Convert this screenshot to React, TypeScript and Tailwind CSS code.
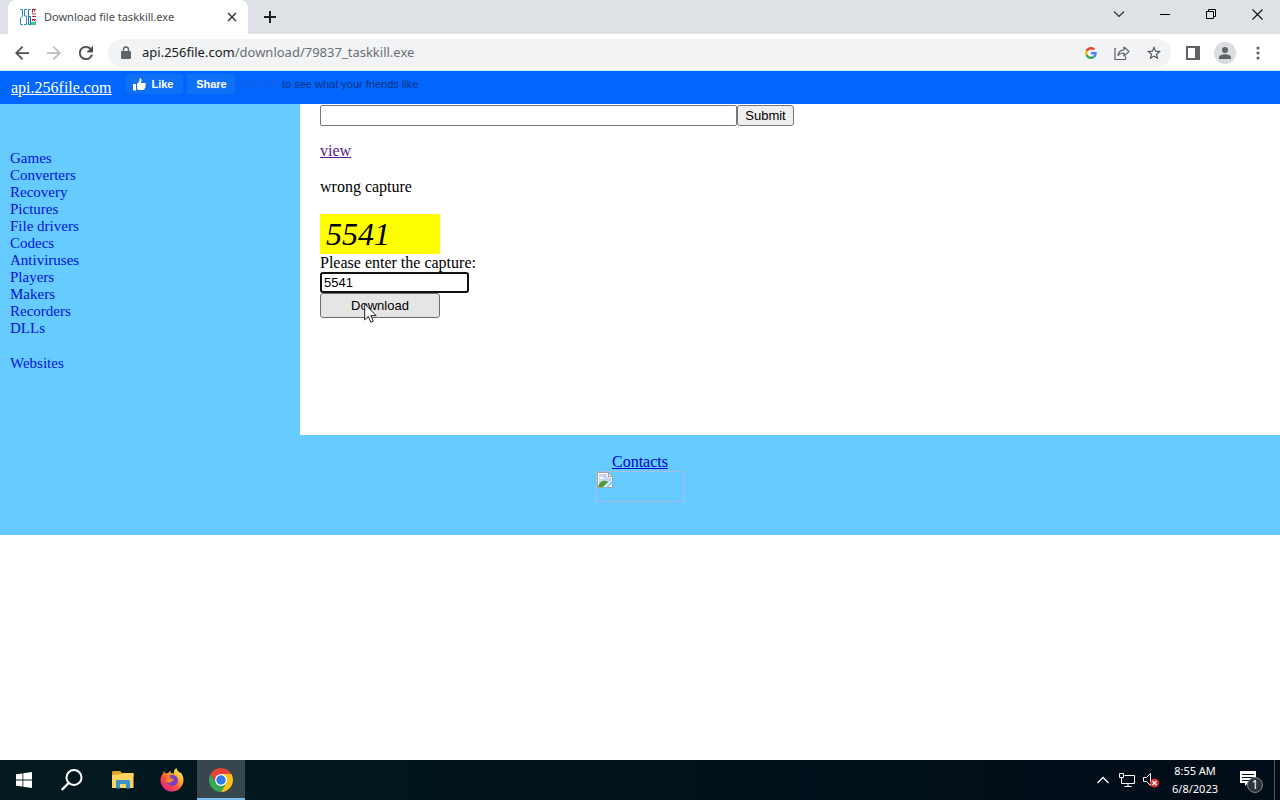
import React from "react";

const categories = [
  "Games",
  "Converters",
  "Recovery",
  "Pictures",
  "File drivers",
  "Codecs",
  "Antiviruses",
  "Players",
  "Makers",
  "Recorders",
  "DLLs",
];

function Favicon() {
  return (
    <svg width="16" height="16" viewBox="0 0 16 16" fill="none" aria-hidden="true">
      <path d="M0 .5h2.500v6.500L.5 9v6.500H3M7 .5H4.500v6.500h2v8.500H4" stroke="#2a8fc4" />
      <path d="M10.500 .5H8.500v15h2v-8h-2" stroke="#1f6f9f" />
      <path d="M12.500 0v3.500M12 .5h4M14.500.5v2M12 5h4M12 7.500h4M12 10.500h4M12.500 10v2M14.500 10v2" stroke="#c2223f" strokeWidth="1.200" />
      <path d="M11 13h4v-1h1v4h-5z" fill="#35c98c" />
    </svg>
  );
}

function TabStrip() {
  return (
    <div className="flex h-[34px] items-stretch bg-[#dee1e6]">
      <div className="ml-2 flex w-60 items-center rounded-t-lg bg-white pr-[9px] pl-3">
        <Favicon />
        <span className="ml-2 flex-1 text-[11px] whitespace-nowrap text-[#45494d]">Download file taskkill.exe</span>
        <button aria-label="Close tab" className="p-0.5">
          <svg width="10" height="10" viewBox="0 0 10 10" stroke="#3c4043" strokeWidth="1.600">
            <path d="M1 1l8 8M9 1l-8 8" />
          </svg>
        </button>
      </div>
      <button aria-label="New tab" className="ml-4">
        <svg width="12" height="12" viewBox="0 0 12 12" stroke="#202124" strokeWidth="2">
          <path d="M6 0v12M0 6h12" />
        </svg>
      </button>
      <div className="ml-auto flex h-7 items-center text-black">
        <button aria-label="Search tabs" className="flex w-[46px] justify-center">
          <svg width="12" height="12" viewBox="0 0 12 12" fill="none" stroke="#333" strokeWidth="1.200">
            <path d="M1 3.500l5 5 5-5" />
          </svg>
        </button>
        <button aria-label="Minimize" className="flex w-[46px] justify-center">
          <svg width="10" height="10" viewBox="0 0 10 10">
            <path d="M0 5h10v1H0z" />
          </svg>
        </button>
        <button aria-label="Restore" className="flex w-[46px] justify-center">
          <svg width="10" height="10" viewBox="0 0 10 10" fill="none" stroke="#000">
            <path d="M.5 2.500h7v7h-7zM2.500 2.500v-2h7v7h-2" />
          </svg>
        </button>
        <button aria-label="Close" className="flex w-[46px] justify-center">
          <svg width="11" height="11" viewBox="0 0 11 11" fill="none" stroke="#111" strokeWidth="1.100">
            <path d="M.5.500l10 10M10.500.500l-10 10" />
          </svg>
        </button>
      </div>
    </div>
  );
}

function Toolbar() {
  return (
    <div className="flex h-[37px] items-center gap-[18px] border-b border-[#c9ecff] bg-white pt-px pl-[15px]">
      <button aria-label="Back">
        <svg width="14" height="14" viewBox="4 4 16 16" fill="#4c5054">
          <path d="M20 11H7.830l5.590-5.590L12 4l-8 8 8 8 1.410-1.410L7.830 13H20z" />
        </svg>
      </button>
      <button aria-label="Forward">
        <svg width="14" height="14" viewBox="4 4 16 16" fill="#babcbe">
          <path d="M12 4l-1.410 1.410L16.170 11H4v2h12.170l-5.580 5.590L12 20l8-8z" />
        </svg>
      </button>
      <button aria-label="Reload">
        <svg width="14" height="14" viewBox="4 4 16 16" fill="#4c5054" stroke="#4c5054" strokeWidth="0.400">
          <path d="M17.650 6.350A7.960 7.960 0 0 0 12 4a8 8 0 1 0 7.730 10h-2.080A6 6 0 1 1 12 6c1.660 0 3.140.690 4.220 1.780L13 11h7V4z" />
        </svg>
      </button>
      <div className="-mx-[3px] flex h-7 flex-1 items-center rounded-full bg-[#f1f3f4] pr-2.5 pl-3">
        <svg width="12" height="14" viewBox="0 0 12 14" className="mr-2.5" aria-hidden="true">
          <path d="M2 5h8a1 1 0 0 1 1 1v6a1 1 0 0 1-1 1H2a1 1 0 0 1-1-1V6a1 1 0 0 1 1-1z" fill="#5f6368" />
          <path d="M3.500 5.500V3.500a2.500 2.500 0 0 1 5 0v2" fill="none" stroke="#5f6368" strokeWidth="1.300" />
        </svg>
        <span className="flex-1 text-[13px] whitespace-nowrap text-[#6b6f74]">
          <span className="text-[#202124]">api.256file.com</span>/download/79837_taskkill.exe
        </span>
        <div className="flex items-center gap-4">
          <button aria-label="Search with Google">
            <svg width="12" height="12" viewBox="0 0 48 48">
              <path fill="#EA4335" d="M24 9.500c3.540 0 6.710 1.220 9.210 3.600l6.850-6.850C35.900 2.380 30.470 0 24 0 14.620 0 6.510 5.380 2.560 13.220l7.980 6.190C12.430 13.720 17.740 9.500 24 9.500z" />
              <path fill="#4285F4" d="M46.980 24.550c0-1.570-.150-3.090-.380-4.550H24v9.020h12.940c-.580 2.960-2.260 5.480-4.780 7.180l7.730 6c4.510-4.180 7.090-10.360 7.090-17.650z" />
              <path fill="#FBBC05" d="M10.530 28.590A14.500 14.500 0 0 1 9.770 24c0-1.600.270-3.140.760-4.590l-7.980-6.190A24 24 0 0 0 0 24c0 3.880.920 7.540 2.560 10.780z" />
              <path fill="#34A853" d="M24 48c6.480 0 11.930-2.130 15.890-5.810l-7.730-6c-2.150 1.450-4.920 2.300-8.160 2.300-6.260 0-11.570-4.220-13.470-9.910l-7.980 6.190C6.510 42.620 14.620 48 24 48z" />
            </svg>
          </button>
          <button aria-label="Share this page">
            <svg width="18" height="16" viewBox="0 0 18 16" fill="none" stroke="#5f6368" strokeWidth="1.200">
              <path d="M3 3.500H2v11h10.500v-3" />
              <path d="M5 10.500c.5-4 2.500-5.500 6-5.700V2l5 4.500-5 4.500V8c-3 0-4.700.7-6 2.500z" strokeLinejoin="round" />
            </svg>
          </button>
          <button aria-label="Bookmark this tab">
            <svg width="14" height="14" viewBox="2 2 20 20" fill="#4c5054">
              <path d="M22 9.240l-7.190-.620L12 2 9.190 8.630 2 9.240l5.460 4.730L5.820 21 12 17.270 18.180 21l-1.630-7.030zM12 15.400l-3.760 2.270 1-4.280-3.320-2.880 4.380-.380L12 6.100l1.710 4.040 4.380.380-3.320 2.880 1 4.280z" />
            </svg>
          </button>
        </div>
      </div>
      <div className="flex items-center gap-3.5 pr-3.5">
        <button aria-label="Side panel">
          <svg width="14" height="14" viewBox="0 0 14 14">
            <path d="M0 0h14v14H0z" fill="#5f6368" />
            <path d="M2 2h7v10H2z" fill="#fff" />
          </svg>
        </button>
        <button aria-label="Profile" className="rounded-full bg-[#dadce0]">
          <svg width="22" height="22" viewBox="0 0 22 22" fill="#5f6368">
            <circle cx="11" cy="8" r="3" />
            <path d="M5 17v-1.500C5 13 8.500 12.200 11 12.200s6 .8 6 3.300V17z" />
          </svg>
        </button>
        <button aria-label="Menu" className="flex w-4 justify-center">
          <svg width="4" height="14" viewBox="0 0 4 14" fill="#5f6368">
            <circle cx="2" cy="2" r="1.600" />
            <circle cx="2" cy="7" r="1.600" />
            <circle cx="2" cy="12" r="1.600" />
          </svg>
        </button>
      </div>
    </div>
  );
}

function SiteHeader() {
  return (
    <header className="flex h-[33px] items-start bg-[#0166ff] pl-[11px]">
      <a href="#" className="mt-2 font-['Liberation_Serif',serif] text-base leading-[18px] text-white underline">
        api.256file.com
      </a>
      <div className="mt-[3px] ml-[15px] flex items-center font-['Liberation_Sans',sans-serif] text-[11px] font-bold">
        <button className="flex h-5 w-[57px] items-center gap-[5px] rounded-xs bg-[#0f70f5] pl-[7px] text-white">
          <svg width="13" height="13" viewBox="0 0 13 13" fill="#fff" aria-hidden="true">
            <path d="M0 6h3v6.500H0zM4 6l2.500-3V.8C6.500 0 8.500 0 8.500 2c0 1.200-.4 2-.6 3H12c1.200 0 1.200 1.600.3 1.900.7.500.5 1.600-.2 1.800.5.600.2 1.500-.5 1.600.3.800-.1 1.700-1 1.700H6.500L4 11.500z" />
          </svg>
          Like
        </button>
        <button className="ml-1 h-5 w-[48px] rounded-xs bg-[#0f70f5] text-white">Share</button>
        <span className="ml-[5px] text-[10px] font-normal whitespace-nowrap text-[#1a60dd]">Sign Up</span>
        <span className="ml-1.5 text-[11px] font-normal whitespace-nowrap text-[#0c3180]">to see what your friends like</span>
      </div>
    </header>
  );
}

function Pointer() {
  return (
    <svg className="pointer-events-none absolute top-2.5 left-11" width="13" height="20" viewBox="0 0 13 20" aria-hidden="true">
      <path d="M.7.900v16l3.600-3.400 2.500 5.700 2.500-1.100-2.400-5.500h5.200z" fill="#fff" stroke="#222" />
    </svg>
  );
}

function Site() {
  return (
    <div className="flex-1 bg-white font-['Liberation_Serif',serif] text-base leading-[18px] text-black">
      <SiteHeader />
      <div className="flex min-h-[331px] items-stretch">
        <nav className="w-[300px] shrink-0 bg-[#66ccff] pt-[46px] pl-2.5 text-[15px] leading-[17px] text-[#0510dc]">
          <ul>
            {categories.map((name) => (
              <li key={name}>
                <a href="#">{name}</a>
              </li>
            ))}
            <li className="mt-[18px]">
              <a href="#">Websites</a>
            </li>
          </ul>
        </nav>
        <main className="flex-1 pt-px pl-5">
          <form className="flex font-['Liberation_Sans',sans-serif] text-[13px]" onSubmit={(e) => e.preventDefault()}>
            <input aria-label="Search" className="h-[21px] w-[417px] rounded-xs border border-[#767676] bg-white px-0.5" />
            <button className="h-[21px] w-[57px] rounded-[3px] border border-[#767676] bg-[#efefef] leading-[18px]">Submit</button>
          </form>
          <p className="mt-4">
            <a href="#" className="text-[#551a8b] underline">view</a>
          </p>
          <p className="mt-[18px]">wrong capture</p>
          <form className="mt-[18px] flex flex-col items-start" onSubmit={(e) => e.preventDefault()}>
            <svg width="120" height="40" viewBox="0 0 120 40" role="img" aria-label="5541">
              <path d="M0 0h120v40H0z" fill="#ffff00" />
              <text x="6" y="31" fontFamily="Liberation Serif, serif" fontStyle="italic" fontSize="32">
                5541
              </text>
            </svg>
            <label htmlFor="capture">Please enter the capture:</label>
            <input
              id="capture"
              defaultValue="5541"
              className="h-[21px] w-[149px] rounded-[3px] border-2 border-[#101010] bg-white px-0.5 font-['Liberation_Sans',sans-serif] text-[13px] outline-none"
            />
            <div className="relative">
              <button className="h-[25px] w-[120px] rounded-[3px] border border-[#6b6b6b] bg-[#e5e5e5] font-['Liberation_Sans',sans-serif] text-[13px]">
                Download
              </button>
              <Pointer />
            </div>
          </form>
        </main>
      </div>
      <footer className="flex h-[100px] flex-col items-center bg-[#66ccff] pt-[18px]">
        <a href="#" className="text-[#0000cc] underline">Contacts</a>
        <div className="h-[31px] w-[88px] border border-[#a3c0e0]" role="img" aria-label="Counter">
          <svg width="16" height="16" viewBox="0 0 16 16">
            <path d="M.5.500h11l4 4v11H.5z" fill="#fff" stroke="#a3a3a3" />
            <path d="M2 2h8v3.500h4V9L8 14H2z" fill="#c2d5f2" />
            <path d="M1 15c1-5 6-8 10-5l-5 5z" fill="#4e9d35" />
            <path d="M3 6c0-1.500 2-2 2.500-.7C7 5 7 7 6 7H3z" fill="#fff" />
            <path d="M16 8L8 16h2L16 10.500z" fill="#66ccff" />
            <path d="M11.500.500v4h4z" fill="#eee" stroke="#a3a3a3" />
          </svg>
        </div>
      </footer>
    </div>
  );
}

function Taskbar() {
  return (
    <div className="flex h-10 items-stretch bg-linear-to-r from-[#021a20] to-[#020c18] text-white">
      <button aria-label="Start" className="flex w-12 items-center justify-center">
        <svg width="16" height="16" viewBox="0 0 16 16" fill="#fff">
          <path d="M0 2.300l6.500-.9v6.200H0zM7.300 1.300L16 0v7.600H7.300zM0 8.400h6.500v6.200L0 13.700zM7.300 8.400H16V16l-8.700-1.300z" />
        </svg>
      </button>
      <button aria-label="Search" className="flex w-12 items-center justify-center">
        <svg width="22" height="22" viewBox="0 0 22 22" fill="none" stroke="#fff" strokeWidth="2">
          <circle cx="13" cy="8.500" r="7.500" />
          <path d="M7.700 14L.8 21" strokeWidth="2.400" />
        </svg>
      </button>
      <button aria-label="File Explorer" className="ml-0.5 flex w-[49px] items-center justify-center">
        <svg width="22" height="18" viewBox="0 0 22 18">
          <path d="M0 1.500C0 .500.500 0 1.500 0H8l2 2h11.500v4H0z" fill="#dfa32d" />
          <path d="M0 4l10-1 1-1h10.500v15H0z" fill="#fcd462" />
          <path d="M4 17.500V10.500c0-1 .5-1.500 1.500-1.500h11c1 0 1.500.500 1.500 1.500v7h-4V13H8v4.500z" fill="#3d93c8" />
        </svg>
      </button>
      <button aria-label="Firefox" className="mr-px flex w-[49px] items-center justify-center">
        <svg width="24" height="24" viewBox="0 0 24 24">
          <defs>
            <linearGradient id="fox" x1="0.900" y1="0.100" x2="0.200" y2="0.950">
              <stop offset="0" stopColor="#fff04a" />
              <stop offset="0.350" stopColor="#ffa52d" />
              <stop offset="0.650" stopColor="#ff4c3e" />
              <stop offset="1" stopColor="#e3208d" />
            </linearGradient>
          </defs>
          <path d="M3 5.500C3.300 4.500 3.800 3.500 4.300 3c0 1 .4 1.700.9 2.200L8 5C9 3.800 10.300 3.200 11 3c-.4.700-.5 1.400-.4 2l3.400.5C13.600 3.200 14.500 1.200 16.500 0c.3 2.500 2.300 3.600 3.700 5.300.2-.4.200-.8.100-1.200 2 2 3.200 5.200 3.200 8A11.500 11.500 0 1 1 .5 12c0-2.600 1-4.900 2.500-6.500z" fill="url(#fox)" />
          <path d="M9 7.500c4-2 9 .3 9 5a5.700 5.700 0 0 1-11.300 1c1.700 1.200 3.400.7 4.800-.5 1-.8 2-.4 2-.9 0-1-1.500-1.500-3.500-1.500-.5-1.300.2-2 .8-2.500-.9-.1-1.300-.4-1.800-.6z" fill="#7b3fc0" />
          <path d="M6 13.300C8 16 10.800 14.200 12.500 13c1 0 1.500-.6 1-1.200-.8-1-2-1.300-3.400-1.200L7 9z" fill="#ff8a2a" />
        </svg>
      </button>
      <button aria-label="Google Chrome" className="flex w-12 items-center justify-center border-b-2 border-[#76b9ed] bg-[#37474d] pt-0.5">
        <svg width="24" height="24" viewBox="0 0 24 24">
          <path d="M12 6h10.390A12 12 0 0 1 12 24l5.200-9z" fill="#fbc116" />
          <path d="M6.800 15L1.610 6A12 12 0 0 0 12 24l5.200-9z" fill="#34a853" />
          <path d="M1.610 6A12 12 0 0 1 22.390 6H12a6 6 0 0 0-5.200 9z" fill="#ea4335" />
          <circle cx="12" cy="12" r="6" fill="#fff" />
          <circle cx="12" cy="12" r="4.700" fill="#2f7be8" />
        </svg>
      </button>
      <div className="ml-auto flex items-center">
        <button aria-label="Show hidden icons">
          <svg width="12" height="8" viewBox="0 0 12 8" fill="none" stroke="#fff" strokeWidth="1.300">
            <path d="M.5 7L6 1.500 11.500 7" />
          </svg>
        </button>
        <svg className="ml-2.5" width="16" height="15" viewBox="0 0 16 15" fill="none" stroke="#fff" role="img" aria-label="Network">
          <path d="M5.500 2.500h10v8H2.500v-4M9 10.500v3M5.500 13.500h7" />
          <path d="M.5.500h4v4h-4zM2.500 4.500v3" />
        </svg>
        <svg className="ml-2" width="16" height="16" viewBox="0 0 16 16" role="img" aria-label="Muted">
          <path d="M.5 5.500h3l4-4v12l-4-4h-3z" fill="none" stroke="#fff" />
          <circle cx="11.500" cy="11" r="4.500" fill="#d62f36" />
          <path d="M9.500 9l4 4M13.500 9l-4 4" stroke="#fff" strokeWidth="1.200" />
        </svg>
        <div className="ml-3 w-12 text-center text-[11px] leading-[18px] whitespace-nowrap">
          <div>8:55 AM</div>
          <div>6/8/2023</div>
        </div>
        <button aria-label="Notifications" className="ml-5">
          <svg width="26" height="26" viewBox="0 0 26 26">
            <path d="M1 4h16v12H9l-3 3v-3H1z" fill="#fff" />
            <path d="M3 7.500h12M3 10.500h12M3 13.500h8" stroke="#020c18" />
            <circle cx="16" cy="18" r="7.500" fill="#2c333b" stroke="#7d848a" />
            <text x="16" y="22" textAnchor="middle" fontSize="12" fill="#fff" fontFamily="Noto Sans, sans-serif">
              1
            </text>
          </svg>
        </button>
        <div className="ml-[9px] h-10 w-1.5 border-l border-[#4a525a]" />
      </div>
    </div>
  );
}

export default function App() {
  return (
    <div className="flex min-h-screen flex-col bg-white font-['Noto_Sans',sans-serif]">
      <TabStrip />
      <Toolbar />
      <Site />
      <Taskbar />
    </div>
  );
}
